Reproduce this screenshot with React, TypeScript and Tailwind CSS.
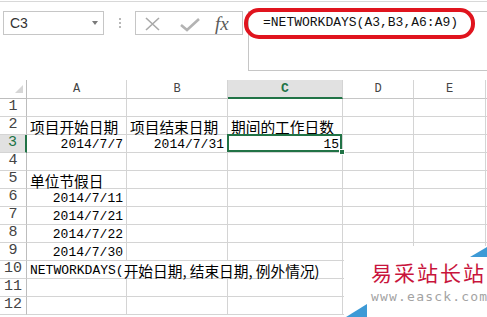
import React from "react";

// widths include the right gridline
const cols = [
  { key: "A", w: "w-[100px]" },
  { key: "B", w: "w-[101px]" },
  { key: "C", w: "w-[115px]" },
  { key: "D", w: "w-[71px]" },
  { key: "E", w: "w-[72px]" },
];

type RowData = {
  n: number;
  a?: string;
  b?: string;
  c?: string;
  kind?: "cjk" | "num";
};

const rows: RowData[] = [
  { n: 1 },
  { n: 2, a: "项目开始日期", b: "项目结束日期", c: "期间的工作日数", kind: "cjk" },
  { n: 3, a: "2014/7/7", b: "2014/7/31", c: "15", kind: "num" },
  { n: 4 },
  { n: 5, a: "单位节假日", kind: "cjk" },
  { n: 6, a: "2014/7/11", kind: "num" },
  { n: 7, a: "2014/7/21", kind: "num" },
  { n: 8, a: "2014/7/22", kind: "num" },
  { n: 9, a: "2014/7/30", kind: "num" },
  { n: 10 },
  { n: 11 },
  { n: 12 },
];

const mono = "font-['Liberation_Mono',monospace] text-[13px]";
const cjk = "font-['Noto_Sans_CJK_SC',sans-serif] text-[14.7px]";

function RowHead({ n }: { n: number }) {
  const sel = n === 3;
  return (
    <div
      className={`flex h-full w-[27px] shrink-0 items-center justify-center border-b border-b-[#d4d4d4] font-['Liberation_Mono',monospace] text-[15px] ${
        sel
          ? "border-r-2 border-r-[#217346] bg-[#e1e1e1] text-[#217346]"
          : "border-r border-r-[#bdbdbd] text-[#444]"
      }`}
    >
      {n}
    </div>
  );
}

function Cell({
  w,
  text,
  kind,
  selected,
}: {
  w: string;
  text?: string;
  kind?: "cjk" | "num";
  selected?: boolean;
}) {
  return (
    <div
      className={`relative flex h-full shrink-0 items-center whitespace-nowrap border-r border-b border-[#d4d4d4] px-[3px] pt-[2px] leading-[16px] ${w} ${
        kind === "num" ? `justify-end ${mono}` : cjk
      }`}
    >
      {text}
      {selected && (
        <>
          <div className="absolute -left-px -top-px right-0 bottom-0 z-10 border-2 border-[#217346]" />
          <div className="absolute -right-[3px] -bottom-[3px] z-10 h-[6px] w-[6px] border border-white bg-[#217346]" />
        </>
      )}
    </div>
  );
}

function Row({ r }: { r: RowData }) {
  if (r.n === 10) {
    return (
      <div className="flex h-[18px]">
        <RowHead n={10} />
        <div className="flex h-full w-[316px] shrink-0 items-center whitespace-nowrap border-r border-b border-[#d4d4d4] px-[3px] pt-[2px] leading-[16px]">
          <span className={mono}>NETWORKDAYS(</span>
          <span className={cjk}>开始日期, 结束日期, 例外情况)</span>
        </div>
        <Cell w="w-[71px]" />
        <Cell w="w-[72px]" />
        <div className="h-full flex-1 border-b border-[#d4d4d4]" />
      </div>
    );
  }
  return (
    <div className="flex h-[18px]">
      <RowHead n={r.n} />
      <Cell w={cols[0].w} text={r.a} kind={r.kind} />
      <Cell w={cols[1].w} text={r.b} kind={r.kind} />
      <Cell w={cols[2].w} text={r.c} kind={r.kind} selected={r.n === 3} />
      <Cell w={cols[3].w} />
      <Cell w={cols[4].w} />
      <div className="h-full flex-1 border-b border-[#d4d4d4]" />
    </div>
  );
}

export default function App() {
  return (
    <div className="relative h-[317px] w-[487px] overflow-hidden bg-white text-black">
      {/* name box + formula bar */}
      <div className="mt-px h-[79px] border-t border-[#d8d8d8]">
        <div className="flex items-start pt-[9px]">
          <div className="ml-[3px] flex h-[24px] w-[101px] items-center justify-between border border-[#c6c6c6] pl-[6px] pr-[5px]">
            <span className="font-['Liberation_Sans',sans-serif] text-[14px] text-[#333]">C3</span>
            <span className="h-0 w-0 border-x-[3px] border-t-[4px] border-x-transparent border-t-[#7a7a7a]" />
          </div>

          <div className="ml-[15px] mt-[7px] flex flex-col gap-[2px]">
            <span className="h-[2px] w-[2px] bg-[#b8b8b8]" />
            <span className="h-[2px] w-[2px] bg-[#b8b8b8]" />
            <span className="h-[2px] w-[2px] bg-[#b8b8b8]" />
          </div>

          <div className="ml-[14px] flex h-[24px] w-[108px] items-center border border-[#c6c6c6]">
            <svg className="ml-[9px] mt-[2px]" width="15" height="14" viewBox="0 0 15 14">
              <path d="M1 1 L14 13 M14 1 L1 13" stroke="#a9a9a9" strokeWidth="1.6" fill="none" />
            </svg>
            <svg className="ml-[20px] mt-[2px]" width="20" height="15" viewBox="0 0 20 15">
              <path d="M1 8 L7 13 L19 2" stroke="#b3b3b3" strokeWidth="2.6" fill="none" />
            </svg>
            <span className="ml-[15px] font-['Liberation_Serif',serif] text-[19px] italic leading-none text-[#5a5a5a]">
              fx
            </span>
          </div>

          <div className="relative ml-[5px] h-[60px] flex-1 border-y border-l border-[#c6c6c6]">
            <div className="pl-[14px] pt-px font-['Liberation_Mono',monospace] text-[13px] leading-[20px] text-[#111]">
              =NETWORKDAYS(A3,B3,A6:A9)
            </div>
            {/* red highlight ring */}
            <div className="absolute -left-[5px] -top-[4px] h-[31px] w-[231px] rounded-[15px] border-[4px] border-[#e0141e]" />
          </div>
        </div>
      </div>

      {/* column headers */}
      <div className="flex h-[19px]">
        <div className="flex h-full w-[27px] shrink-0 items-end justify-end border-r border-b border-[#bdbdbd] pr-[3px] pb-[5px]">
          <svg width="8" height="8" viewBox="0 0 8 8">
            <polygon points="8,0 8,8 0,8" fill="#d6d6d6" />
          </svg>
        </div>
        {cols.map((c) =>
          c.key === "C" ? (
            <div
              key={c.key}
              className={`flex h-full shrink-0 items-center justify-center border-r border-r-[#d4d4d4] border-b-2 border-b-[#217346] bg-[#e1e1e1] pt-px font-['Liberation_Mono',monospace] text-[13px] font-bold text-[#217346] ${c.w}`}
            >
              {c.key}
            </div>
          ) : (
            <div
              key={c.key}
              className={`flex h-full shrink-0 items-center justify-center border-r border-b border-r-[#d4d4d4] border-b-[#c6c6c6] font-['Liberation_Mono',monospace] text-[12px] text-[#444] ${c.w}`}
            >
              {c.key}
            </div>
          )
        )}
        <div className="h-full flex-1 border-b border-[#c6c6c6]" />
      </div>

      {rows.map((r) => (
        <Row key={r.n} r={r} />
      ))}

      {/* site watermark */}
      <div className="absolute left-[344px] top-[246px] z-20 h-[71px] w-[143px] bg-white">
        <svg className="absolute left-0 top-0" width="143" height="71" viewBox="0 0 143 71">
          <polygon points="126,11 143,1 143,11" fill="#3d9ad6" />
          <polygon points="2,71 23,58 23,71" fill="#3d9ad6" />
        </svg>
        <div className="relative flex flex-col pl-[27px] pt-[12px]">
          <span className="font-['Noto_Sans_CJK_SC',sans-serif] text-[21px] leading-[28px] tracking-[2px] text-[#c8143c]">
            易采站长站
          </span>
          <span className="mt-[1px] font-['DejaVu_Sans_Mono',monospace] text-[13px] leading-[20px] tracking-[1.2px] text-[#a3a3a3]">
            www.easck.com
          </span>
        </div>
      </div>
    </div>
  );
}
